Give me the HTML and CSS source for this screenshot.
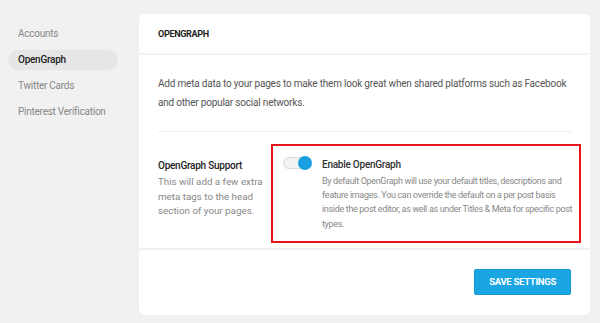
FILE: index.html
```html
<!DOCTYPE html>
<html lang="en">
<head>
    <meta charset="UTF-8">
    <title>Social settings</title>
    <link rel="stylesheet" href="styles.css">
</head>
<body>
    <div class="layout">
        <ul class="side-nav">
            <li class="nav-item">Accounts</li>
            <li class="nav-item active">OpenGraph</li>
            <li class="nav-item">Twitter Cards</li>
            <li class="nav-item">Pinterest Verification</li>
        </ul>

        <div class="card">
            <div class="card-header">OpenGraph</div>

            <div class="card-body">
                <p class="intro">Add meta data to your pages to make them look great when shared platforms such as Facebook and other popular social networks.</p>

                <div class="setting-row">
                    <div class="setting-label">
                        <h3>OpenGraph Support</h3>
                        <p>This will add a few extra meta tags to the head section of your pages.</p>
                    </div>
                    <div class="setting-field">
                        <label class="toggle">
                            <input type="checkbox" checked>
                            <span class="track"></span>
                        </label>
                        <div class="field-text">
                            <h4>Enable OpenGraph</h4>
                            <p>By default OpenGraph will use your default titles, descriptions and feature images. You can override the default on a per post basis inside the post editor, as well as under Titles &amp; Meta for specific post types.</p>
                        </div>
                    </div>
                </div>
            </div>

            <div class="card-footer">
                <button class="btn">Save Settings</button>
            </div>
        </div>
    </div>
</body>
</html>
```

FILE: styles.css
```css
body {
    margin: 0;
    background: #f1f1f1;
    font-family: Roboto, 'Liberation Sans', sans-serif;
    color: #555;
}
.layout {
    display: flex;
    align-items: flex-start;
    padding: 14px 10px 0 8px;
}
.side-nav {
    list-style: none;
    margin: 0 21px 0 0;
    padding: 10px 0 0;
    width: 110px;
    display: flex;
    flex-direction: column;
    gap: 6px;
}
.nav-item {
    height: 20px;
    line-height: 20px;
    padding: 0 10px;
    border-radius: 10px;
    font-size: 10px;
    letter-spacing: -0.25px;
    color: #888;
    white-space: nowrap;
}
.nav-item.active {
    background: #e6e6e6;
    color: #222;
    font-weight: 500;
}
.card {
    flex: 1;
    background: #fff;
    border-radius: 5px;
    box-shadow: 0 1px 1px rgba(0, 0, 0, 0.04);
}
.card-header {
    height: 39px;
    line-height: 40px;
    padding: 0 19px;
    border-bottom: 2px solid #f2f2f2;
    font-size: 9px;
    font-weight: 700;
    letter-spacing: -0.3px;
    text-transform: uppercase;
    color: #222;
}
.card-body {
    padding: 19px 19px 0;
}
.intro {
    margin: 0;
    font-size: 10px;
    letter-spacing: -0.2px;
    line-height: 19px;
    padding-bottom: 19px;
    border-bottom: 1px solid #eee;
}
.setting-row {
    display: flex;
    padding: 12px 0 5px;
}
.setting-label {
    width: 113px;
    flex-shrink: 0;
    padding-top: 16px;
}
.setting-label h3 {
    margin: 0 0 4px;
    font-size: 10px;
    letter-spacing: -0.25px;
    font-weight: 500;
    color: #222;
}
.setting-label p {
    margin: 0;
    font-size: 9.8px;
    line-height: 14.5px;
    color: #888;
}
.setting-field {
    display: flex;
    gap: 11px;
    margin-right: -10px;
    padding: 11px 4px 10px 10px;
    border: 2px solid #e8141b;
    flex: 1;
}
.toggle {
    position: relative;
    flex-shrink: 0;
    width: 28px;
    height: 12px;
}
.toggle input {
    display: none;
}
.track {
    position: absolute;
    top: 0;
    left: 0;
    right: 0;
    bottom: 0;
    box-sizing: border-box;
    border: 1px solid #dcdcdc;
    border-radius: 6px;
    background: #f3f3f3;
}
.track::after {
    content: "";
    position: absolute;
    top: -2px;
    right: -2px;
    width: 14px;
    height: 14px;
    border-radius: 50%;
    background: #1a9fe0;
}
.field-text h4 {
    margin: 2px 0 4px;
    font-size: 10px;
    letter-spacing: -0.25px;
    font-weight: 500;
    color: #333;
}
.field-text p {
    margin: 0;
    font-size: 9px;
    letter-spacing: -0.33px;
    line-height: 14.2px;
    color: #888;
}
.card-footer {
    border-top: 2px solid #f2f2f2;
    padding: 19px 19px 20px;
    display: flex;
    justify-content: flex-end;
}
.btn {
    height: 26px;
    padding: 0 14px;
    border: 1px solid #1497d4;
    border-radius: 2px;
    background: #1aa6e3;
    color: #fff;
    font-family: Roboto, 'Liberation Sans', sans-serif;
    font-size: 9.5px;
    letter-spacing: -0.3px;
    font-weight: 700;
    text-transform: uppercase;
    cursor: pointer;
}
```
